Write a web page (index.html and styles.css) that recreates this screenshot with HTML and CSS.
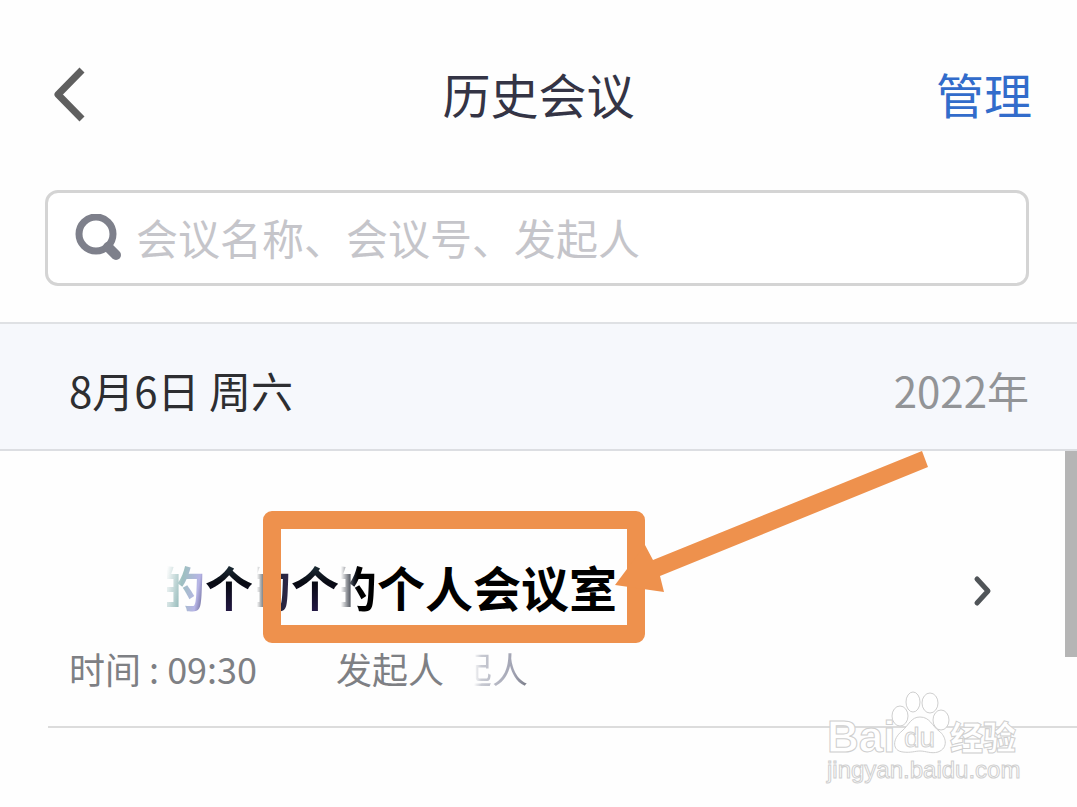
FILE: index.html
```
<!DOCTYPE html>
<html lang="zh-CN">
<head>
<meta charset="utf-8">
<meta name="viewport" content="width=device-width, initial-scale=1">
<title>历史会议</title>
<link rel="stylesheet" href="styles.css">
</head>
<body>
<div class="page">
  <header class="topbar">
    <button class="back" type="button" aria-label="返回">
      <svg width="42" height="56" viewBox="0 0 42 56"><path d="M37 3 13 27.500 37 52" fill="none" stroke="#5f5f5f" stroke-width="7" stroke-linejoin="round"/></svg>
    </button>
    <h1 class="heading">历史会议</h1>
    <button class="manage" type="button">管理</button>
  </header>
  <label class="search">
    <svg width="48" height="48" viewBox="0 0 48 48" aria-hidden="true"><g fill="none" stroke="#7e808b"><circle cx="22" cy="20" r="17" stroke-width="7"/><path d="M34 33 42 41" stroke-width="10" stroke-linecap="round"/></g></svg>
    <input class="field" type="text" aria-label="搜索会议" placeholder="会议名称、会议号、发起人">
  </label>
  <div class="day">
    <h2 class="date">8月6日 周六</h2>
    <span class="year">2022年</span>
  </div>
  <main class="list">
    <a class="meeting" href="#">
      <span class="info">
        <span class="name"><span class="part faint">的</span><span class="echo">个</span><span class="part dim">的</span><span class="echo">个</span><span class="part half">的</span><span>个人会议室</span></span>
        <span class="meta"><span class="time">时间 : 09:30</span><span>发起人</span><span class="host">起人</span></span>
      </span>
      <svg class="chevron" width="20" height="32" viewBox="0 0 20 32" aria-hidden="true"><path d="M4 4 15 16 4 28" fill="none" stroke="#505458" stroke-width="5" stroke-linecap="round" stroke-linejoin="round"/></svg>
    </a>
    <div class="scrollbar"></div>
    <div class="callout"></div>
    <svg class="arrow" width="316" height="144" viewBox="0 0 316 144" aria-hidden="true"><path d="M0 134 30 94 38 109 307 0 313 16 45 125 49 141Z" fill="#ee914d"/></svg>
  </main>
  <svg class="watermark" width="200" height="100" viewBox="0 0 200 100" role="img" aria-label="Baidu 经验">
    <g class="mark">
      <text class="brand" x="4" y="61">Bai</text>
      <ellipse cx="77" cy="25" rx="8" ry="10"/>
      <ellipse cx="90" cy="11" rx="7" ry="10"/>
      <ellipse cx="107" cy="12" rx="8" ry="10"/>
      <ellipse cx="118" cy="29" rx="8" ry="10"/>
      <path d="M97 26C88 26 86 34 79 40C69 48 69 60 80 61C88 62 92 60 97 60C103 60 108 63 115 61C126 57 123 45 116 40C109 35 107 26 97 26Z"/>
      <text class="inner" x="81" y="56">du</text>
      <text class="topic" x="127" y="59">经验</text>
      <text class="site" x="4" y="87">jingyan.baidu.com</text>
    </g>
  </svg>
</div>
</body>
</html>
```
FILE: styles.css
```
* { box-sizing: border-box; }
body {
  margin: 0;
  background: #fefefe;
  color: #2d2e31;
  font-family: "Noto Sans CJK SC", sans-serif;
}
.page { position: relative; min-height: 100vh; overflow: hidden; }
button { border: 0; padding: 0; background: none; font: inherit; }

.topbar {
  display: grid;
  grid-template-columns: 1fr auto 1fr;
  align-items: center;
  height: 190px;
  padding: 0 45px 4px;
}
.back { justify-self: start; display: flex; padding-top: 4px; }
.heading { margin: 0; font-size: 48px; line-height: 64px; font-weight: 400; color: #343445; }
.manage { justify-self: end; font-size: 48px; line-height: 64px; color: #326ccb; }

.search {
  display: flex;
  align-items: center;
  gap: 14px;
  height: 96px;
  margin: 0 48px 36px 45px;
  padding: 0 26px;
  border: 3px solid #d4d4d4;
  border-radius: 13px;
  background: #fff;
}
.field {
  flex: 1;
  min-width: 0;
  height: 64px;
  padding: 0 0 4px;
  border: 0;
  outline: 0;
  background: none;
  font: 42px "Noto Sans CJK SC", sans-serif;
}
.field::placeholder { color: #c5c5ca; opacity: 1; }

.day {
  display: flex;
  align-items: center;
  justify-content: space-between;
  height: 129px;
  padding: 6px 48px 0 69px;
  border-top: 2px solid #dfe1e4;
  border-bottom: 2px solid #dcdee2;
  background: #f6f8fc;
  font-size: 42px;
  line-height: 60px;
}
.date { margin: 0; font-size: 42px; font-weight: 400; }
.year { color: #929497; }

.list { position: relative; }
.meeting {
  display: flex;
  align-items: center;
  justify-content: space-between;
  height: 277px;
  margin-left: 48px;
  padding: 0 84px 0 21px;
  border-bottom: 2px solid #dcdcdc;
  color: #7e8084;
  text-decoration: none;
}
.info { display: flex; flex-direction: column; gap: 26px; padding-top: 68px; }
.name {
  display: flex;
  padding-left: 98px;
  font-size: 48px;
  line-height: 64px;
  font-weight: 700;
  color: #000;
  white-space: nowrap;
}
.echo, .part {
  color: transparent;
  background: linear-gradient(#2c4650, #070912 45%, #2a1c50);
  background-clip: text;
  -webkit-background-clip: text;
}
.part {
  display: flex;
  justify-content: flex-end;
  width: 38px;
  overflow: hidden;
}
.faint { background-image: linear-gradient(100deg, #ffffff00 5%, #9ec0c0 40%, #b7b5e6 75%, #44426e); }
.dim { background-image: linear-gradient(90deg, #ffffff00 10%, #182027 40%, #30284c); }
.half { background-image: linear-gradient(90deg, #ffffff00 5%, #161c28 40%, #000 50%); }
.meta { display: flex; font-size: 36px; line-height: 48px; white-space: nowrap; }
.time { width: 267px; }
.host {
  margin-left: 12px;
  color: transparent;
  background: linear-gradient(90deg, #ffffff00 25%, #c9cbd3 35%, #a0a2b2 80%, #777984);
  background-clip: text;
  -webkit-background-clip: text;
}
.chevron { margin-top: 4px; }

.scrollbar { position: absolute; top: 0; right: 0; width: 12px; height: 206px; background: #b5b5b5; }
.callout {
  position: absolute;
  top: 60px;
  left: 263px;
  width: 382px;
  height: 132px;
  border: 18px solid #ee914d;
  border-radius: 9px;
}
.arrow { position: absolute; top: 0; left: 615px; }

.watermark { position: absolute; top: 691px; right: 54px; }
.mark { fill: #fff; stroke: #cfcfcf; stroke-width: 1px; font-family: "Liberation Sans", "Noto Sans CJK SC", sans-serif; }
.brand { font-size: 44px; font-weight: 700; }
.inner { font-size: 28px; }
.topic { font-size: 33px; font-weight: 900; }
.site { font-size: 24px; }
```
